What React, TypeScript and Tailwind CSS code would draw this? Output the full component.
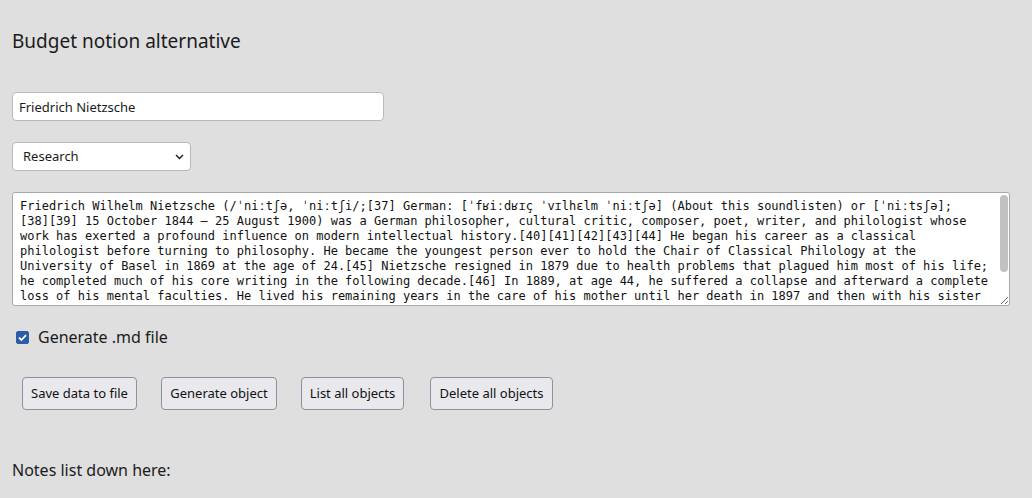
import React, { useState } from 'react';

// \u2060 keeps "[38][39]" style citations from splitting across lines
const bio =
  'Friedrich Wilhelm Nietzsche (/ˈniːtʃə, ˈniːtʃi/;\u2060[37] German: [ˈfʁiːdʁɪç ˈvɪlhɛlm ˈniːtʃə] (About this soundlisten) or [ˈniːtsʃə]; [38]\u2060[39] 15 October 1844 – 25 August 1900) was a German philosopher, cultural critic, composer, poet, writer, and philologist whose work has exerted a profound influence on modern intellectual history.\u2060[40]\u2060[41]\u2060[42]\u2060[43]\u2060[44] He began his career as a classical philologist before turning to philosophy. He became the youngest person ever to hold the Chair of Classical Philology at the University of Basel in 1869 at the age of 24.\u2060[45] Nietzsche resigned in 1879 due to health problems that plagued him most of his life; he completed much of his core writing in the following decade.\u2060[46] In 1889, at age 44, he suffered a collapse and afterward a complete loss of his mental faculties. He lived his remaining years in the care of his mother until her death in 1897 and then with his sister Elisabeth Förster-Nietzsche. Nietzsche died in 1900 after experiencing pneumonia and multiple strokes.';

const actions = [
  { label: 'Save data to file', cls: 'w-[115px]' },
  { label: 'Generate object', cls: 'w-[116px]' },
  { label: 'List all objects', cls: 'w-[103px]' },
  { label: 'Delete all objects', cls: 'w-[123px] ml-[2px]' }
];

export default function App() {
  const [title, setTitle] = useState('Friedrich Nietzsche');
  const [kind, setKind] = useState('Research');
  const [body, setBody] = useState(bio);
  const [makeMd, setMakeMd] = useState(true);

  return (
    <div className="min-h-screen bg-[#dfdfdf] pl-[12px] pt-[28px] font-['Noto_Sans',sans-serif] text-[#1b1b1b]">
      <h1 className="text-[19px] leading-[26px] font-normal">Budget notion alternative</h1>

      <input
        type="text"
        value={title}
        onChange={e => setTitle(e.target.value)}
        className="mt-[38px] block h-[29px] w-[372px] rounded-[4px] border border-[#b9b9b9] bg-white px-[6px] text-[13px] outline-none"
      />

      {/* type picker */}
      <div className="relative mt-[21px] w-[179px]">
        <select
          value={kind}
          onChange={e => setKind(e.target.value)}
          className="block h-[29px] w-full appearance-none rounded-[4px] border border-[#b9b9b9] bg-white pl-[10px] text-[13px] outline-none"
        >
          <option>Research</option>
          <option>Journal</option>
          <option>Todo</option>
        </select>
        <svg className="pointer-events-none absolute right-[7px] top-[12px]" width="9" height="6" viewBox="0 0 9 6">
          <path d="M1 1l3.5 3.5L8 1" fill="none" stroke="#222" strokeWidth="1.5" />
        </svg>
      </div>

      <div className="relative mt-[21px] w-[998px]">
        <textarea
          value={body}
          onChange={e => setBody(e.target.value)}
          className="block h-[114px] w-full overflow-hidden rounded-[3px] border border-[#a9a9a9] bg-white pl-[7px] pr-[17px] pt-[6px] font-['DejaVu_Sans_Mono',monospace] text-[12px] leading-[15px] text-[#111] outline-none"
        />
        {/* scrollbar */}
        <div className="pointer-events-none absolute right-[2px] top-[3px] h-[77px] w-[8px] rounded-full bg-[#c1c1c1]" />
      </div>

      <label className="mt-[19px] flex h-[24px] items-center pl-[4px] text-[16px]">
        <span className="relative mr-[9px] h-[13px] w-[13px]">
          <input
            type="checkbox"
            checked={makeMd}
            onChange={e => setMakeMd(e.target.checked)}
            className="block h-[13px] w-[13px] appearance-none rounded-[2px] border border-[#767676] bg-white checked:border-[#2a5da6] checked:bg-[#2a5da6]"
          />
          {makeMd && (
            <svg className="pointer-events-none absolute left-0 top-0" width="13" height="13" viewBox="0 0 13 13">
              <path d="M3 6.6l2.4 2.4L10 4.2" fill="none" stroke="#fff" strokeWidth="1.8" />
            </svg>
          )}
        </span>
        Generate .md file
      </label>

      <div className="mt-[28px] flex gap-[24px] pl-[10px]">
        {actions.map(a => (
          <button
            key={a.label}
            className={`h-[33px] rounded-[4px] border border-[#8f8f9d] bg-[#e9e9ed] text-[13px] text-[#111] hover:bg-[#d0d0d7] ${a.cls}`}
          >
            {a.label}
          </button>
        ))}
      </div>

      <p className="mt-[48px] text-[16px] leading-[24px]">Notes list down here:</p>
    </div>
  );
}
